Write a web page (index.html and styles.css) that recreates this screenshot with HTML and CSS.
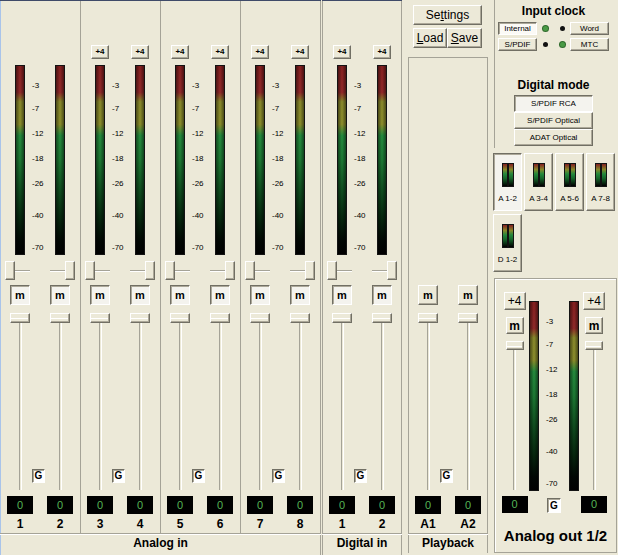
FILE: index.html
```html
<!DOCTYPE html>
<html lang="en">
<head>
    <meta charset="UTF-8">
    <title>Mixer</title>
    <link rel="stylesheet" href="styles.css">
</head>
<body>
<div class="mixer">

    <!-- Analog in -->
    <section class="section analog">
        <div class="pairs">
            <div class="pair">
                <div class="boost-row"></div>
                <div class="meter-row">
                    <div class="meter"></div>
                    <div class="scale"><span>-3</span><span>-7</span><span>-12</span><span>-18</span><span>-26</span><span>-40</span><span>-70</span></div>
                    <div class="meter"></div>
                </div>
                <div class="pan-row">
                    <div class="pan"><span class="btn knob"></span><span class="groove"></span></div>
                    <div class="pan"><span class="groove"></span><span class="btn knob"></span></div>
                </div>
                <div class="mute-row"><button class="btn mute down">m</button><button class="btn mute down">m</button></div>
                <div class="fader-row">
                    <div class="fader"><span class="btn cap"></span><span class="rail"></span></div>
                    <button class="btn gain down">G</button>
                    <div class="fader"><span class="btn cap"></span><span class="rail"></span></div>
                </div>
                <div class="value-row"><div class="value">0</div><div class="value">0</div></div>
                <div class="num-row"><span>1</span><span>2</span></div>
            </div>

            <div class="pair">
                <div class="boost-row"><button class="btn boost">+4</button><button class="btn boost">+4</button></div>
                <div class="meter-row">
                    <div class="meter"></div>
                    <div class="scale"><span>-3</span><span>-7</span><span>-12</span><span>-18</span><span>-26</span><span>-40</span><span>-70</span></div>
                    <div class="meter"></div>
                </div>
                <div class="pan-row">
                    <div class="pan"><span class="btn knob"></span><span class="groove"></span></div>
                    <div class="pan"><span class="groove"></span><span class="btn knob"></span></div>
                </div>
                <div class="mute-row"><button class="btn mute down">m</button><button class="btn mute down">m</button></div>
                <div class="fader-row">
                    <div class="fader"><span class="btn cap"></span><span class="rail"></span></div>
                    <button class="btn gain down">G</button>
                    <div class="fader"><span class="btn cap"></span><span class="rail"></span></div>
                </div>
                <div class="value-row"><div class="value">0</div><div class="value">0</div></div>
                <div class="num-row"><span>3</span><span>4</span></div>
            </div>

            <div class="pair">
                <div class="boost-row"><button class="btn boost">+4</button><button class="btn boost">+4</button></div>
                <div class="meter-row">
                    <div class="meter"></div>
                    <div class="scale"><span>-3</span><span>-7</span><span>-12</span><span>-18</span><span>-26</span><span>-40</span><span>-70</span></div>
                    <div class="meter"></div>
                </div>
                <div class="pan-row">
                    <div class="pan"><span class="btn knob"></span><span class="groove"></span></div>
                    <div class="pan"><span class="groove"></span><span class="btn knob"></span></div>
                </div>
                <div class="mute-row"><button class="btn mute down">m</button><button class="btn mute down">m</button></div>
                <div class="fader-row">
                    <div class="fader"><span class="btn cap"></span><span class="rail"></span></div>
                    <button class="btn gain down">G</button>
                    <div class="fader"><span class="btn cap"></span><span class="rail"></span></div>
                </div>
                <div class="value-row"><div class="value">0</div><div class="value">0</div></div>
                <div class="num-row"><span>5</span><span>6</span></div>
            </div>

            <div class="pair">
                <div class="boost-row"><button class="btn boost">+4</button><button class="btn boost">+4</button></div>
                <div class="meter-row">
                    <div class="meter"></div>
                    <div class="scale"><span>-3</span><span>-7</span><span>-12</span><span>-18</span><span>-26</span><span>-40</span><span>-70</span></div>
                    <div class="meter"></div>
                </div>
                <div class="pan-row">
                    <div class="pan"><span class="btn knob"></span><span class="groove"></span></div>
                    <div class="pan"><span class="groove"></span><span class="btn knob"></span></div>
                </div>
                <div class="mute-row"><button class="btn mute down">m</button><button class="btn mute down">m</button></div>
                <div class="fader-row">
                    <div class="fader"><span class="btn cap"></span><span class="rail"></span></div>
                    <button class="btn gain down">G</button>
                    <div class="fader"><span class="btn cap"></span><span class="rail"></span></div>
                </div>
                <div class="value-row"><div class="value">0</div><div class="value">0</div></div>
                <div class="num-row"><span>7</span><span>8</span></div>
            </div>
        </div>
        <div class="section-label">Analog in</div>
    </section>

    <!-- Digital in -->
    <section class="section digital">
        <div class="pair">
            <div class="boost-row"><button class="btn boost">+4</button><button class="btn boost">+4</button></div>
            <div class="meter-row">
                <div class="meter"></div>
                <div class="scale"><span>-3</span><span>-7</span><span>-12</span><span>-18</span><span>-26</span><span>-40</span><span>-70</span></div>
                <div class="meter"></div>
            </div>
            <div class="pan-row">
                <div class="pan"><span class="btn knob"></span><span class="groove"></span></div>
                <div class="pan"><span class="groove"></span><span class="btn knob"></span></div>
            </div>
            <div class="mute-row"><button class="btn mute down">m</button><button class="btn mute down">m</button></div>
            <div class="fader-row">
                <div class="fader"><span class="btn cap"></span><span class="rail"></span></div>
                <button class="btn gain down">G</button>
                <div class="fader"><span class="btn cap"></span><span class="rail"></span></div>
            </div>
            <div class="value-row"><div class="value">0</div><div class="value">0</div></div>
            <div class="num-row"><span>1</span><span>2</span></div>
        </div>
        <div class="section-label">Digital in</div>
    </section>

    <!-- Playback -->
    <section class="section playback">
        <div class="tools">
            <button class="btn settings">Se<u>t</u>tings</button>
            <div class="tool-row">
                <button class="btn load"><u>L</u>oad</button>
                <button class="btn save"><u>S</u>ave</button>
            </div>
        </div>
        <div class="pair">
            <div class="mute-row"><button class="btn mute">m</button><button class="btn mute">m</button></div>
            <div class="fader-row">
                <div class="fader"><span class="btn cap"></span><span class="rail"></span></div>
                <button class="btn gain down">G</button>
                <div class="fader"><span class="btn cap"></span><span class="rail"></span></div>
            </div>
            <div class="value-row"><div class="value">0</div><div class="value">0</div></div>
            <div class="num-row"><span>A1</span><span>A2</span></div>
        </div>
        <div class="section-label">Playback</div>
    </section>

    <!-- Right side -->
    <div class="side">
        <div class="clock">
            <div class="title">Input clock</div>
            <div class="clock-row">
                <button class="btn tiny down">Internal</button>
                <span class="led on"></span>
                <span class="led"></span>
                <button class="btn tiny">Word</button>
            </div>
            <div class="clock-row">
                <button class="btn tiny">S/PDIF</button>
                <span class="led"></span>
                <span class="led on"></span>
                <button class="btn tiny">MTC</button>
            </div>
            <div class="title mode-title">Digital mode</div>
            <div class="modes">
                <button class="btn mode down">S/PDIF RCA</button>
                <button class="btn mode">S/PDIF Optical</button>
                <button class="btn mode">ADAT Optical</button>
            </div>
        </div>

        <div class="selectors">
            <button class="btn sel down"><span class="mini"></span><span>A 1-2</span></button>
            <button class="btn sel"><span class="mini"></span><span>A 3-4</span></button>
            <button class="btn sel"><span class="mini"></span><span>A 5-6</span></button>
            <button class="btn sel"><span class="mini"></span><span>A 7-8</span></button>
            <button class="btn sel"><span class="mini"></span><span>D 1-2</span></button>
        </div>

        <div class="out">
            <div class="out-body">
                <div class="out-ch">
                    <button class="btn boost big">+4</button>
                    <button class="btn mute big">m</button>
                    <div class="fader"><span class="btn cap"></span><span class="rail"></span></div>
                    <div class="value">0</div>
                </div>
                <div class="meter"></div>
                <div class="out-mid">
                    <div class="scale"><span>-3</span><span>-7</span><span>-12</span><span>-18</span><span>-26</span><span>-40</span><span>-70</span></div>
                    <button class="btn gain down">G</button>
                </div>
                <div class="meter"></div>
                <div class="out-ch wide">
                    <button class="btn boost big">+4</button>
                    <button class="btn mute big">m</button>
                    <div class="fader"><span class="btn cap"></span><span class="rail"></span></div>
                    <div class="value">0</div>
                </div>
            </div>
            <div class="out-title">Analog out 1/2</div>
        </div>
    </div>

</div>
</body>
</html>
```

FILE: styles.css
```css
body {
    margin: 0;
    width: 618px;
    height: 555px;
    overflow: hidden;
    background-color: #ece9d8;
    font-family: "Liberation Sans", Arial, sans-serif;
    color: #000;
}
.mixer {
    display: flex;
    height: 555px;
}

/* sections */
.section {
    display: flex;
    flex-direction: column;
}
.analog {
    width: 321px;
    border-top: 1px solid #3f4a68;
    box-shadow: inset 1px 0 #a9c4ea, inset -1px 0 #a5a397;
}
.digital {
    width: 80px;
    margin-left: 1px;
    border-top: 1px solid #3f4a68;
    box-shadow: inset 1px 0 #a5a397, inset -1px 0 #a5a397;
}
.playback {
    width: 80px;
    margin-left: 6px;
}
.pairs {
    display: flex;
}
.pair {
    width: 80px;
    height: 532px;
    display: flex;
    flex-direction: column;
    flex-shrink: 0;
}
.pair + .pair {
    box-shadow: inset 1px 0 #a5a397;
}
.section-label {
    height: 20px;
    line-height: 20px;
    text-align: center;
    font-size: 12px;
    font-weight: bold;
    box-shadow: inset 0 1px #a5a397, inset 0 2px #fff;
}
.playback .section-label {
    box-shadow: inset 0 1px #a5a397, inset 0 2px #fff, inset 1px 0 #a5a397, inset -1px 0 #a5a397;
}

/* buttons */
.btn {
    display: block;
    box-sizing: border-box;
    margin: 0;
    padding: 0;
    font-family: inherit;
    color: #000;
    background-color: #ece9d8;
    border: 1px solid;
    border-color: #fff #716f64 #716f64 #fff;
    box-shadow: inset -1px -1px #aca899;
}
.btn.down {
    border-color: #716f64 #fff #fff #716f64;
    box-shadow: inset 1px 1px #aca899;
    background-color: #f4f3ee;
}

/* strip rows */
.boost-row,
.mute-row,
.value-row,
.num-row {
    display: grid;
    grid-template-columns: 40px 40px;
    justify-items: center;
}
.boost-row {
    height: 64px;
    box-sizing: border-box;
    padding-bottom: 6px;
    align-items: end;
}
.boost {
    width: 18px;
    height: 14px;
    font-size: 8px;
    font-weight: bold;
    line-height: 10px;
}
.meter-row {
    height: 190px;
    display: grid;
    grid-template-columns: 10px 30px 10px;
    padding-left: 15px;
}
.meter {
    width: 10px;
    height: 190px;
    box-sizing: border-box;
    border: 1px solid #141414;
    background:
        linear-gradient(to right, rgba(0, 0, 0, 0.45), rgba(0, 0, 0, 0) 45%, rgba(0, 0, 0, 0) 55%, rgba(0, 0, 0, 0.45)),
        linear-gradient(to bottom, #842020 0, #8e2828 14%, #86862a 19%, #888a2a 31%, #23883c 37%, #1c7632 50%, #0f4c1e 66%, #05240c 82%, #010703 93%, #000 100%);
}
.scale {
    display: grid;
    grid-template-rows: 23px 25px 25px 25px 32px 32px 10px;
    height: 190px;
    box-sizing: border-box;
    padding: 16px 0 0 7px;
    font-size: 8px;
    line-height: 10px;
}
.pan-row {
    margin-top: 6px;
    height: 19px;
    display: grid;
    grid-template-columns: 25px 25px;
    column-gap: 20px;
    padding-left: 5px;
}
.pan {
    display: flex;
    align-items: center;
}
.knob {
    width: 10px;
    height: 19px;
}
.groove {
    flex: 1;
    height: 2px;
    box-sizing: border-box;
    border-top: 1px solid #a5a397;
    border-bottom: 1px solid #fff;
}
.mute-row {
    margin-top: 5px;
    height: 20px;
}
.mute {
    width: 20px;
    height: 20px;
    font-size: 11px;
    font-weight: bold;
}
.fader-row {
    margin-top: 8px;
    height: 177px;
    display: flex;
    padding-left: 10px;
}
.fader {
    width: 20px;
    display: flex;
    flex-direction: column;
    align-items: center;
}
.cap {
    width: 20px;
    height: 10px;
    box-shadow: inset -1px -1px #aca899, inset 0 4px #ece9d8, inset 0 5px #fff;
}
.rail {
    flex: 1;
    width: 3px;
    box-sizing: border-box;
    border-left: 1px solid #a5a397;
    border-right: 1px solid #fff;
}
.gain {
    align-self: flex-end;
    width: 13px;
    height: 14px;
    margin: 0 5px 7px 2px;
    font-size: 10px;
    font-weight: bold;
    line-height: 10px;
}
.gain.down {
    background-color: #fff;
}
.value-row {
    margin-top: 6px;
    height: 18px;
}
.value {
    width: 26px;
    height: 18px;
    background-color: #000;
    color: #55b455;
    font-size: 11px;
    line-height: 18px;
    text-align: center;
}
.num-row {
    margin-top: 3px;
    height: 14px;
    font-size: 12px;
    font-weight: bold;
    line-height: 14px;
}

/* playback */
.tools {
    height: 57px;
    box-sizing: border-box;
    padding: 5px 0 0 5px;
}
.settings {
    width: 69px;
    height: 20px;
    font-size: 12px;
}
.tool-row {
    display: flex;
    margin-top: 3px;
}
.load,
.save {
    height: 20px;
    font-size: 12px;
}
.load {
    width: 34px;
}
.save {
    width: 35px;
}
.playback .pair {
    height: 476px;
    box-shadow: inset 1px 1px #a5a397, inset -1px 0 #a5a397;
}
.playback .mute-row {
    margin-top: 228px;
}

/* right side */
.side {
    width: 130px;
    display: flex;
    flex-direction: column;
}
.clock {
    margin-left: 6px;
    height: 148px;
    box-sizing: border-box;
    border-left: 1px solid #a5a397;
}
.title {
    margin-top: 5px;
    padding-right: 6px;
    font-size: 12px;
    font-weight: bold;
    line-height: 12px;
    text-align: center;
}
.clock-row {
    display: flex;
    align-items: center;
    margin: 5px 0 0 3px;
    height: 13px;
}
.clock-row + .clock-row {
    margin-top: 3px;
}
.tiny {
    width: 39px;
    height: 13px;
    font-size: 8px;
    line-height: 9px;
}
.tiny.down {
    background-color: #fbfaf6;
}
.led {
    width: 5px;
    height: 5px;
    border-radius: 50%;
    background-color: #111;
    margin-left: 6px;
}
.led + .led {
    margin-left: 12px;
}
.led + .tiny {
    margin-left: 5px;
}
.led.on {
    background-color: #4a9a45;
    box-shadow: 0 0 0 1px #2f6a2c;
}
.mode-title {
    margin-top: 28px;
    line-height: 13px;
}
.modes {
    margin: 3px 0 0 19px;
    width: 79px;
}
.mode {
    width: 79px;
    height: 17px;
    font-size: 8px;
}
.selectors {
    margin: 5px 0 0 5px;
    display: grid;
    grid-template-columns: repeat(4, 29px);
    grid-auto-rows: 58px;
    gap: 3px 2px;
}
.sel {
    display: flex;
    flex-direction: column;
    align-items: center;
    justify-content: flex-start;
    padding-top: 9px;
    font-size: 8px;
    line-height: 9px;
}
.mini {
    width: 12px;
    height: 24px;
    margin-bottom: 7px;
    box-sizing: border-box;
    border: 1px solid #141414;
    background:
        linear-gradient(to right, rgba(0, 0, 0, 0) 4px, #111 4px, #111 6px, rgba(0, 0, 0, 0) 6px),
        linear-gradient(to bottom, #842020 0, #86862a 25%, #23883c 45%, #16662a 65%, #000 100%);
}
.out {
    margin: 6px 0 0 6px;
    width: 123px;
    height: 275px;
    box-sizing: border-box;
    border: 1px solid #a5a397;
    box-shadow: inset 1px 1px #fff;
}
.out-body {
    display: flex;
    height: 234px;
    padding-left: 5px;
}
.out-ch {
    width: 29px;
    display: flex;
    flex-direction: column;
    align-items: center;
}
.out-ch.wide {
    width: 30px;
}
.out-ch .boost {
    margin-top: 13px;
}
.boost.big {
    width: 22px;
    height: 18px;
    font-size: 12px;
    font-weight: normal;
    line-height: 14px;
}
.mute.big {
    width: 18px;
    height: 17px;
    margin-top: 7px;
    font-size: 12px;
}
.out-ch .fader {
    margin-top: 7px;
    height: 149px;
}
.out-ch .cap {
    width: 18px;
    height: 9px;
}
.out-ch .value {
    margin-top: 6px;
    height: 17px;
    line-height: 17px;
}
.out-body .meter {
    margin-top: 22px;
}
.out-mid {
    width: 30px;
    display: flex;
    flex-direction: column;
    align-items: center;
}
.out-mid .scale {
    margin-top: 22px;
    width: 30px;
}
.out-mid .gain {
    width: 14px;
    height: 15px;
    margin: 7px 0 0 0;
    align-self: center;
}
.out-title {
    margin-top: 14px;
    font-size: 15px;
    font-weight: bold;
    line-height: 18px;
    text-align: center;
}
```
